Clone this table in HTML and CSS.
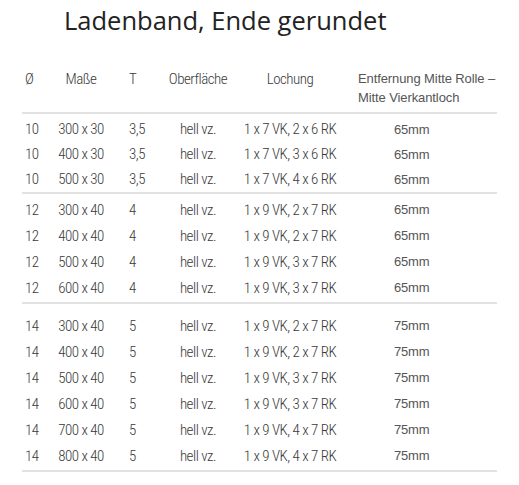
FILE: index.html
```html
<!DOCTYPE html>
<html lang="de">
<head>
<meta charset="utf-8">
<title>Ladenband, Ende gerundet</title>
<link rel="stylesheet" href="styles.css">
</head>
<body>
<h1 class="title">Ladenband, Ende gerundet</h1>
<table class="spec">
  <colgroup>
    <col class="w1"><col class="w2"><col class="w3"><col class="w4"><col class="w5"><col class="w6">
  </colgroup>
  <thead>
    <tr>
      <th class="c1">Ø</th>
      <th class="c2">Maße</th>
      <th class="c3">T</th>
      <th class="c4">Oberfläche</th>
      <th class="c5">Lochung</th>
      <th class="c6">Entfernung Mitte Rolle –<br>Mitte Vierkantloch</th>
    </tr>
  </thead>
  <tbody class="g1">
    <tr><td class="c1">10</td><td class="c2">300 x 30</td><td class="c3">3,5</td><td class="c4">hell vz.</td><td class="c5">1 x 7 VK, 2 x 6 RK</td><td class="c6">65mm</td></tr>
    <tr><td class="c1">10</td><td class="c2">400 x 30</td><td class="c3">3,5</td><td class="c4">hell vz.</td><td class="c5">1 x 7 VK, 3 x 6 RK</td><td class="c6">65mm</td></tr>
    <tr><td class="c1">10</td><td class="c2">500 x 30</td><td class="c3">3,5</td><td class="c4">hell vz.</td><td class="c5">1 x 7 VK, 4 x 6 RK</td><td class="c6">65mm</td></tr>
  </tbody>
  <tbody class="g2">
    <tr><td class="c1">12</td><td class="c2">300 x 40</td><td class="c3">4</td><td class="c4">hell vz.</td><td class="c5">1 x 9 VK, 2 x 7 RK</td><td class="c6">65mm</td></tr>
    <tr><td class="c1">12</td><td class="c2">400 x 40</td><td class="c3">4</td><td class="c4">hell vz.</td><td class="c5">1 x 9 VK, 2 x 7 RK</td><td class="c6">65mm</td></tr>
    <tr><td class="c1">12</td><td class="c2">500 x 40</td><td class="c3">4</td><td class="c4">hell vz.</td><td class="c5">1 x 9 VK, 3 x 7 RK</td><td class="c6">65mm</td></tr>
    <tr><td class="c1">12</td><td class="c2">600 x 40</td><td class="c3">4</td><td class="c4">hell vz.</td><td class="c5">1 x 9 VK, 3 x 7 RK</td><td class="c6">65mm</td></tr>
  </tbody>
  <tbody class="g3">
    <tr><td class="c1">14</td><td class="c2">300 x 40</td><td class="c3">5</td><td class="c4">hell vz.</td><td class="c5">1 x 9 VK, 2 x 7 RK</td><td class="c6">75mm</td></tr>
    <tr><td class="c1">14</td><td class="c2">400 x 40</td><td class="c3">5</td><td class="c4">hell vz.</td><td class="c5">1 x 9 VK, 2 x 7 RK</td><td class="c6">75mm</td></tr>
    <tr><td class="c1">14</td><td class="c2">500 x 40</td><td class="c3">5</td><td class="c4">hell vz.</td><td class="c5">1 x 9 VK, 3 x 7 RK</td><td class="c6">75mm</td></tr>
    <tr><td class="c1">14</td><td class="c2">600 x 40</td><td class="c3">5</td><td class="c4">hell vz.</td><td class="c5">1 x 9 VK, 3 x 7 RK</td><td class="c6">75mm</td></tr>
    <tr><td class="c1">14</td><td class="c2">700 x 40</td><td class="c3">5</td><td class="c4">hell vz.</td><td class="c5">1 x 9 VK, 4 x 7 RK</td><td class="c6">75mm</td></tr>
    <tr><td class="c1">14</td><td class="c2">800 x 40</td><td class="c3">5</td><td class="c4">hell vz.</td><td class="c5">1 x 9 VK, 4 x 7 RK</td><td class="c6">75mm</td></tr>
  </tbody>
</table>
</body>
</html>
```
FILE: styles.css
```css
html, body {
  margin: 0;
  padding: 0;
  background: #fff;
}

.title {
  margin: 4px 0 0 64px;
  font-family: "Open Sans", "Liberation Sans", sans-serif;
  font-weight: 400;
  font-size: 25.5px;
  line-height: 32px;
  color: #222;
}

.spec {
  margin: 28px 0 0 22px;
  width: 475px;
  border-collapse: collapse;
  table-layout: fixed;
  font-family: Roboto, "Liberation Sans", sans-serif;
  font-stretch: 75%;
  font-weight: 350;
  font-size: 15px;
  letter-spacing: -0.5px;
  color: #3a3a3a;
}

.w1 { width: 28px; }
.w2 { width: 62px; }
.w3 { width: 43px; }
.w4 { width: 86px; }
.w5 { width: 98px; }
.w6 { width: 158px; }

.spec th {
  font-weight: 350;
  vertical-align: top;
  padding: 6px 0 5px 0;
  line-height: 18.5px;
  white-space: nowrap;
}

.spec td {
  padding: 0;
  height: 26px;
  line-height: 26px;
  white-space: nowrap;
}
.spec .g1 td {
  height: 25px;
  line-height: 25px;
}

.spec tbody {
  border-top: 2px solid #e2e2e2;
}
.spec tbody.g3 {
  border-bottom: 2px solid #e2e2e2;
}

.c1 { text-align: left; padding-left: 3px !important; }
.c2 { text-align: center; }
.c3 { text-align: left; padding-left: 17px !important; }
.c4 { text-align: center; }
.c5 { text-align: center; }
.spec .c6 {
  text-align: left;
  padding-left: 55px;
  font-family: "Liberation Sans", Arial, sans-serif;
  font-stretch: 100%;
  font-weight: 400;
  font-size: 13px;
  letter-spacing: -0.2px;
  color: #555;
}
.spec th.c6 { padding-left: 19px; letter-spacing: -0.1px; }

.spec tbody tr:first-child td { padding-top: 3px; }
.spec .g2 tr:last-child td { padding-bottom: 1px; }
.spec .g3 tr:first-child td { padding-top: 9px; }
.spec .g3 tr:last-child td { padding-bottom: 1px; }
```
